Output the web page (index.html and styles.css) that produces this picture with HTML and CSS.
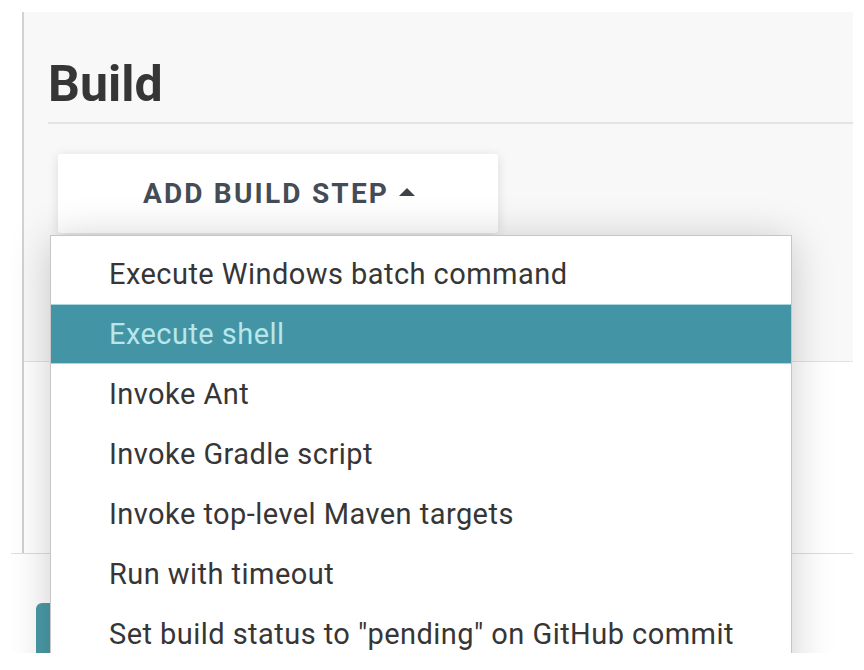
FILE: index.html
```html
<!DOCTYPE html>
<html lang="en">
<head>
<meta charset="utf-8">
<title>Build</title>
<link rel="stylesheet" href="styles.css">
</head>
<body>
<div class="frame">
  <div class="main">
    <section class="section">
      <h2 class="heading">Build</h2>
      <button class="add-btn" type="button"><span class="add-label">ADD BUILD STEP</span><span class="caret"></span></button>
    </section>
  </div>
  <div class="bottombar">
    <div class="save-btn"></div>
  </div>
  <ul class="menu">
    <li class="item">Execute Windows batch command</li>
    <li class="item active">Execute shell</li>
    <li class="item">Invoke Ant</li>
    <li class="item">Invoke Gradle script</li>
    <li class="item">Invoke top-level Maven targets</li>
    <li class="item">Run with timeout</li>
    <li class="item">Set build status to "pending" on GitHub commit</li>
  </ul>
</div>
</body>
</html>
```

FILE: styles.css
```css
* { box-sizing: border-box; }

body {
  margin: 0;
  background: #ffffff;
  font-family: Roboto, "Liberation Sans", sans-serif;
}

.frame {
  position: relative;
  margin: 12px 0 0 11px;
  width: 842px;
  height: 641px;
  overflow: hidden;
  background: #ffffff;
  display: flex;
  flex-direction: column;
}

.main {
  margin-left: 11px;
  height: 541px;
  border-left: 2px solid #d2d2d2;
  flex: none;
}

.section {
  height: 350px;
  background: #f8f8f8;
  border-bottom: 1px solid #e2e2e2;
  padding: 42px 0 0 24px;
}

.heading {
  margin: 0;
  font-size: 50px;
  line-height: 60px;
  font-weight: 700;
  color: #363636;
  padding-bottom: 8px;
  border-bottom: 2px solid #e4e4e4;
}

.add-btn {
  display: flex;
  align-items: center;
  justify-content: center;
  gap: 10px;
  margin: 30px 0 0 10px;
  width: 440px;
  height: 79px;
  border: none;
  border-radius: 3px;
  background: #ffffff;
  box-shadow: 0 2px 12px rgba(0, 0, 0, 0.12);
  font-family: Roboto, "Liberation Sans", sans-serif;
  font-size: 28px;
  font-weight: 700;
  letter-spacing: 2.2px;
  color: #444d57;
  padding: 0 0 0 2px;
}

.caret {
  width: 0;
  height: 0;
  border-left: 8px solid transparent;
  border-right: 8px solid transparent;
  border-bottom: 8px solid #3e4349;
  margin-bottom: 3px;
}

.bottombar {
  flex: 1;
  border-top: 1px solid #d3e3df;
  padding: 49px 0 0 25px;
}

.save-btn {
  width: 120px;
  height: 60px;
  background: #4a9ba8;
  border-radius: 6px 0 0 0;
}

.menu {
  position: absolute;
  left: 39px;
  top: 223px;
  width: 742px;
  height: 460px;
  margin: 0;
  padding: 8px 0 0;
  list-style: none;
  background: #ffffff;
  border: 1px solid #c6c6c6;
  box-shadow: 0 4px 40px rgba(0, 0, 0, 0.2);
}

.item {
  height: 60px;
  display: flex;
  align-items: center;
  padding-left: 58px;
  font-size: 29px;
  letter-spacing: 0.45px;
  color: #363636;
}

.item.active {
  background: #4395a5;
  color: #b8e6ea;
  border-top: 1px solid #a8d6dc;
  border-bottom: 1px solid #a8d6dc;
}
```
